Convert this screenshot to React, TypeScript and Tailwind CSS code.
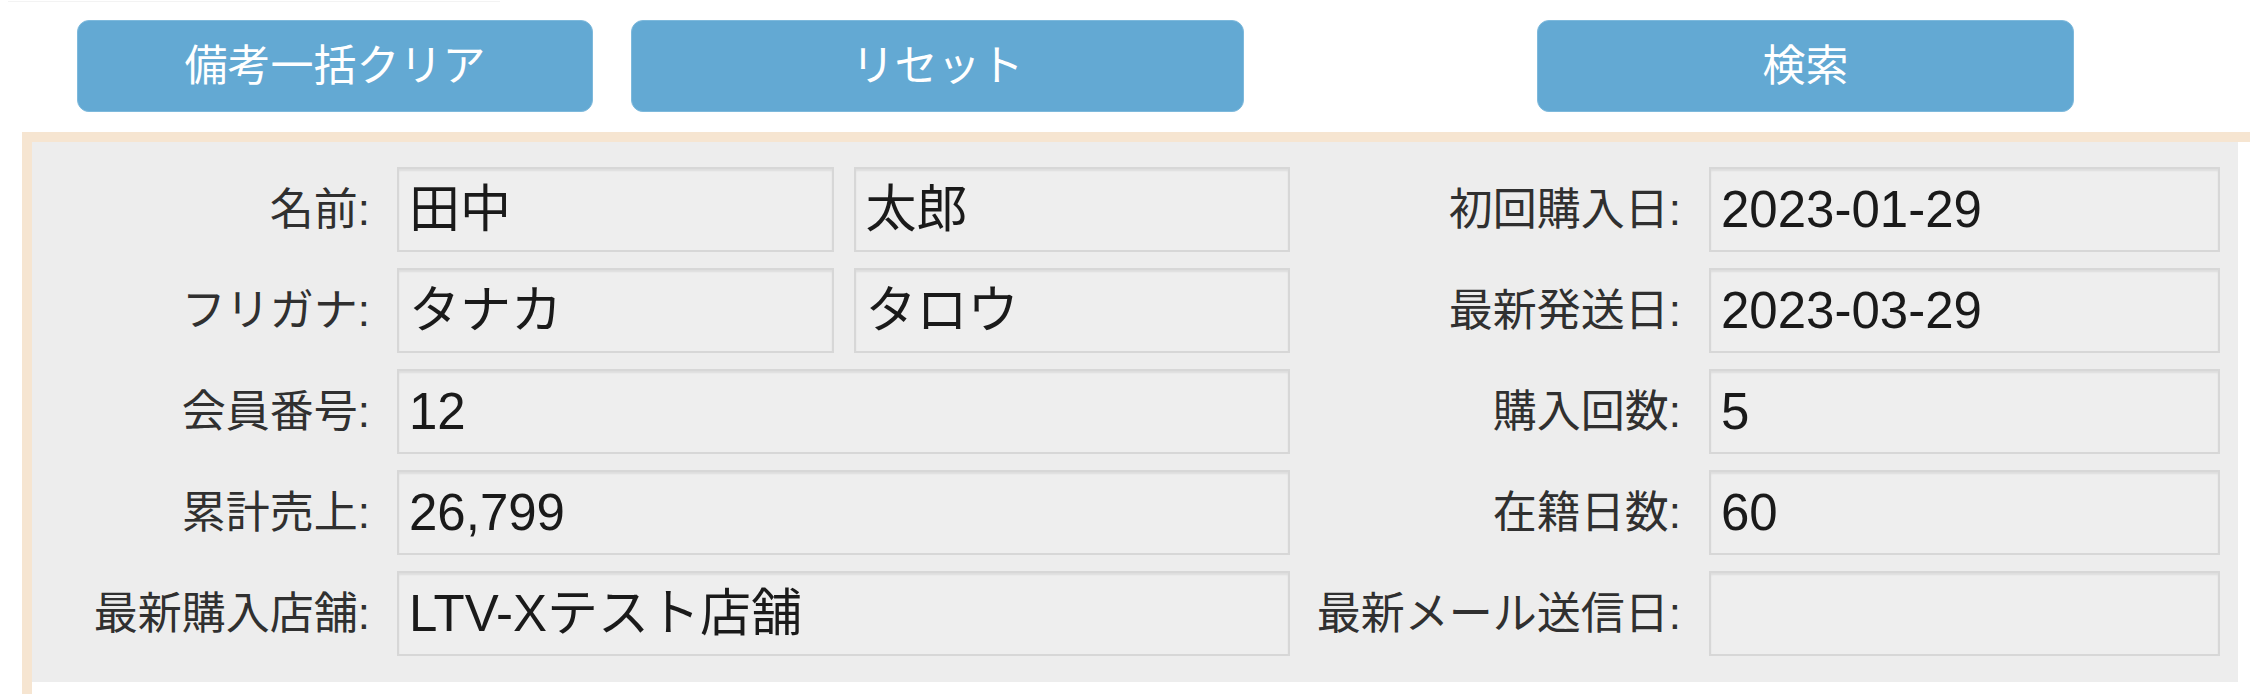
import React from "react";

const FONT = {
  fontFamily: '"Liberation Sans", Arial, "Noto Sans CJK JP", sans-serif',
};

function Field({ value, className = "" }: { value: string; className?: string }) {
  return (
    <div
      className={
        "h-[85px] flex items-center border-2 border-[#d7d7d7] bg-[#eeeeee] pl-[10px] text-[51px] leading-[50px] text-[#1a1a1a] shadow-[inset_0_2px_2px_rgba(0,0,0,0.07)] " +
        className
      }
    >
      {value}
    </div>
  );
}

function Label({ text, className = "" }: { text: string; className?: string }) {
  return (
    <div className={"shrink-0 text-right text-[44px] leading-[44px] text-[#303030] " + className}>
      {text}
    </div>
  );
}

type Row = {
  left: string;
  leftValues: string[];
  right: string;
  rightValue: string;
};

const rows: Row[] = [
  { left: "名前:", leftValues: ["田中", "太郎"], right: "初回購入日:", rightValue: "2023-01-29" },
  { left: "フリガナ:", leftValues: ["タナカ", "タロウ"], right: "最新発送日:", rightValue: "2023-03-29" },
  { left: "会員番号:", leftValues: ["12"], right: "購入回数:", rightValue: "5" },
  { left: "累計売上:", leftValues: ["26,799"], right: "在籍日数:", rightValue: "60" },
  { left: "最新購入店舗:", leftValues: ["LTV-Xテスト店舗"], right: "最新メール送信日:", rightValue: "" },
];

function Button({ text, className = "" }: { text: string; className?: string }) {
  return (
    <button
      className={
        "h-[92px] shrink-0 rounded-[12px] border border-[#7db9dc] bg-[#63a9d3] text-[43px] leading-[43px] text-white " +
        className
      }
      style={FONT}
    >
      {text}
    </button>
  );
}

export default function App() {
  return (
    <div className="w-[2250px] h-[694px] overflow-hidden bg-white" style={FONT}>
      <div className="mt-px ml-[8px] h-px w-[492px] bg-[#f3f3f3]" />
      <div className="mt-[18px] flex pl-[77px]">
        <Button text="備考一括クリア" className="w-[516px]" />
        <Button text="リセット" className="ml-[38px] w-[613px]" />
        <Button text="検索" className="ml-[293px] w-[537px]" />
      </div>
      <div className="mt-[20px] ml-[22px] border-t-[10px] border-l-[10px] border-[#f6e5d1] pb-[12px]">
        <div className="mr-[12px] bg-[#ededed] pt-[25px] pb-[26px] flex flex-col gap-[16px]">
          {rows.map((r, i) => (
            <div key={i} className="flex items-center">
              <Label text={r.left} className="w-[338px]" />
              <div className="ml-[27px] w-[893px] flex gap-[20px]">
                {r.leftValues.map((v, j) => (
                  <Field key={j} value={v} className="flex-1" />
                ))}
              </div>
              <Label text={r.right} className="w-[391px]" />
              <Field value={r.rightValue} className="ml-[28px] w-[511px]" />
            </div>
          ))}
        </div>
      </div>
    </div>
  );
}
